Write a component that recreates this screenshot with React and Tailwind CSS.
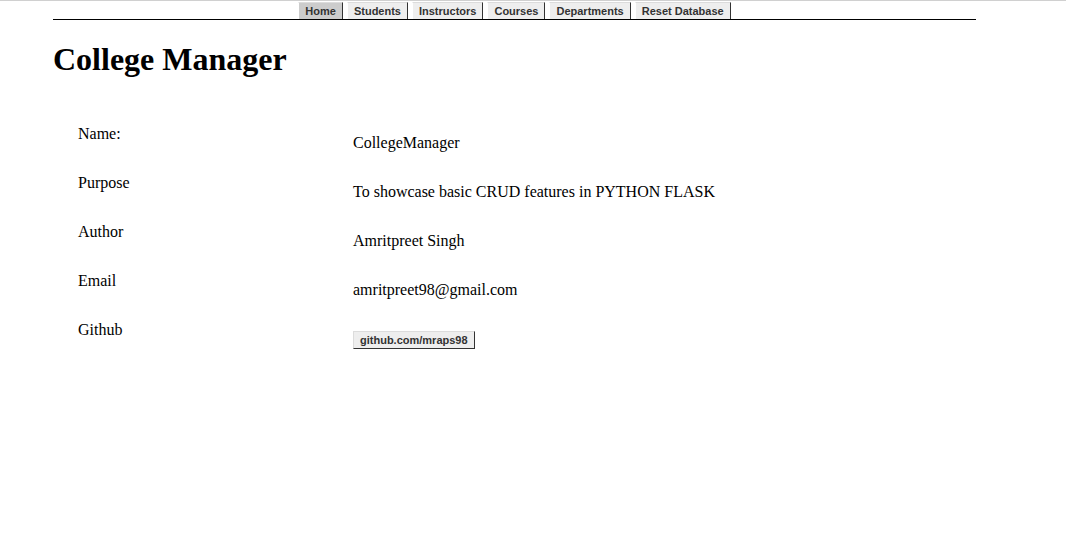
import React from "react";

const navItems = ["Home", "Students", "Instructors", "Courses", "Departments", "Reset Database"];

const rows = [
  { label: "Name:", value: "CollegeManager" },
  { label: "Purpose", value: "To showcase basic CRUD features in PYTHON FLASK" },
  { label: "Author", value: "Amritpreet Singh" },
  { label: "Email", value: "amritpreet98@gmail.com" },
];

export default function App() {
  return (
    <div className="min-h-[539px] bg-white text-black border-t border-[#d0d0d0] font-['Liberation_Serif',serif]">
      {/* Top nav */}
      <div className="ml-[53px] w-[923px] border-b border-black pt-px">
        <div className="flex justify-center gap-[4px]">
          {navItems.map((item, i) => (
            <button
              key={item}
              className={
                "h-[17px] px-[6px] border-l border-t border-r border-l-white border-t-[#dcdcdc] border-r-[#333] text-[11px] leading-[15px] font-bold text-[#333] font-['Liberation_Sans',sans-serif] " +
                (i === 0 ? "bg-[#cccccc]" : "bg-[#eeeeee]")
              }
            >
              {item}
            </button>
          ))}
        </div>
      </div>

      <h1 className="ml-[53px] mt-[21px] text-[32px] font-bold leading-[36px]">College Manager</h1>

      {/* Info table */}
      <div className="ml-[78px] mt-[44px]">
        {rows.map((r) => (
          <div key={r.label} className="flex h-[49px] text-[16px] leading-[18px]">
            <div className="w-[275px] pt-[4px]">{r.label}</div>
            <div className="pt-[13px]">{r.value}</div>
          </div>
        ))}
        <div className="flex h-[49px] text-[16px] leading-[18px]">
          <div className="w-[275px] pt-[4px]">Github</div>
          <div className="pt-[13px]">
            <button className="h-[18px] px-[6px] bg-[#eeeeee] border border-t-[#dcdcdc] border-l-[#dcdcdc] border-r-[#333] border-b-[#333] text-[11px] leading-[14px] font-bold text-[#333] font-['Liberation_Sans',sans-serif]">
              github.com/mraps98
            </button>
          </div>
        </div>
      </div>
    </div>
  );
}
